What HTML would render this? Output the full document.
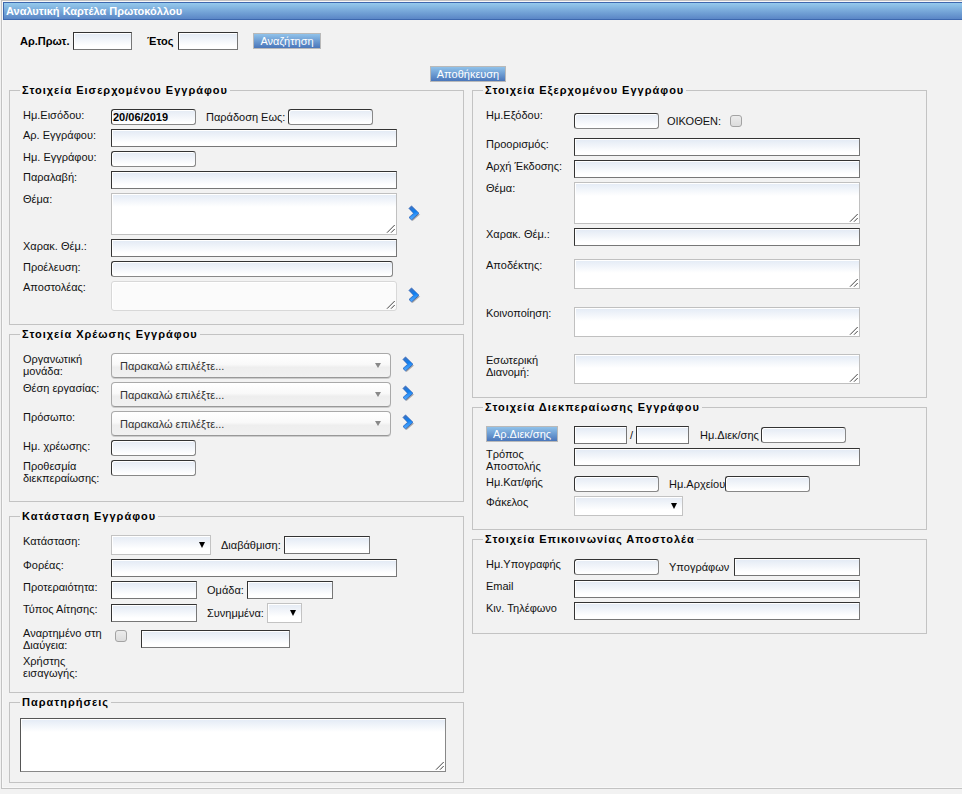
<!DOCTYPE html>
<html><head><meta charset="utf-8"><style>
*{margin:0;padding:0;box-sizing:border-box}
html,body{width:962px;height:794px;overflow:hidden;background:#f2f2f2;font-family:"Liberation Sans",sans-serif;font-size:11px;color:#000}
#frame{position:absolute;left:1px;top:0;width:1000px;height:789px;border:1px solid #c3c3c3;border-right:none;box-shadow:inset 1px 1px 0 #f8f8f8, inset 0 -1px 0 #f8f8f8}
#hdr{position:absolute;left:3px;top:2px;width:990px;height:18px;border:1px solid #3d68ae;background:linear-gradient(#95caec,#5a86c6);color:#fff;font-weight:bold;font-size:11px;line-height:16px;padding-left:2px}
.t{position:absolute;white-space:nowrap;line-height:13px;color:#111}
.t.b{font-weight:bold;color:#000}
.t.ml{line-height:12px}
.in,.inr,.ta,.sel,.dd,.cb,.btn,.chev{position:absolute}
.in{border:1px solid #333;border-right-color:#777;border-bottom-color:#777;background:#fff linear-gradient(#e4ebf5,#fff) 0 1px/100% 12px no-repeat;box-shadow:inset 1px 1px 0 #fff}
.inr{border:1px solid #333;border-right-color:#888;border-bottom-color:#888;border-radius:3px;background:#fff linear-gradient(#e6ecf5,#fff) 0 1px/100% 12px no-repeat;box-shadow:inset 1px 1px 0 #fff}
.ta{border:1px solid #c0c0c0;background:#fff linear-gradient(#e5ecf6,#fff) 0 1px/100% 12px no-repeat;box-shadow:inset 1px 1px 0 #fff}
.ta.dis{background:#fbfbfb;border-color:#d8d8d8;border-radius:3px}
.ta.dk{border-color:#888;border-top-color:#555;border-left-color:#555;box-shadow:inset 1px 1px 0 #fff}
.grip{position:absolute;right:0px;bottom:0px}
.val{position:absolute;left:1px;top:1px;font-weight:bold;line-height:13px;color:#000}
.sel{border:1px solid #a9a9a9;border-bottom-color:#999;border-radius:4px;background:linear-gradient(#fff 0,#f9f9f9 45%,#eeeeee 58%,#f1f1f1 100%);box-shadow:0 1px 0 #ccc}
.sel .pt{position:absolute;left:8px;top:6px;line-height:13px;color:#333}
.sel .ar{position:absolute;right:9px;top:9px;width:0;height:0;border-left:3.5px solid transparent;border-right:3.5px solid transparent;border-top:5px solid #888}
.dd{border:1px solid #c3c3c3;background:#fff linear-gradient(#e6ecf5,#fff) 0 1px/100% 12px no-repeat;box-shadow:inset 1px 1px 0 #fff}
.dd .dar{position:absolute;right:5px;top:6px;width:0;height:0;border-left:3.5px solid transparent;border-right:3.5px solid transparent;border-top:6px solid #000}
.cb{width:12px;height:12px;border:1px solid #a3a3a3;border-radius:3px;background:linear-gradient(#ececec,#dcdcdc)}
.btn{border:1px solid #b9b9b9;background:linear-gradient(#90c2ea,#4a76ba);color:#fff;text-align:center;line-height:14px;font-size:11px}
.fs{position:absolute;border:1px solid #c3c3c3}
.lg{position:absolute;padding:0 2px;background:#f2f2f2;font-weight:bold;letter-spacing:1px;line-height:13px;color:#000;white-space:nowrap}
</style></head><body>
<div id="frame"></div>
<div id="hdr">Αναλυτική Καρτέλα Πρωτοκόλλου</div>
<div class="t b" style="left:20px;top:35px;">Αρ.Πρωτ.</div>
<div class="in" style="left:73px;top:32px;width:59px;height:18px"></div>
<div class="t b" style="left:147px;top:35px;">Έτος</div>
<div class="in" style="left:178px;top:32px;width:60px;height:18px"></div>
<div class="btn" style="left:253px;top:33px;width:68px;height:16px">Αναζήτηση</div>
<div class="btn" style="left:430px;top:66px;width:76px;height:16px">Αποθήκευση</div>
<div class="fs" style="left:9px;top:90px;width:455px;height:235px"></div>
<div class="lg" style="left:20px;top:84px">Στοιχεία Εισερχομένου Εγγράφου</div>
<div class="t " style="left:23px;top:109px;">Ημ.Εισόδου:</div>
<div class="inr" style="left:111px;top:109px;width:85px;height:16px"><span class="val">20/06/2019</span></div>
<div class="t " style="left:206px;top:111px;">Παράδοση Εως:</div>
<div class="inr" style="left:288px;top:109px;width:85px;height:16px"></div>
<div class="t " style="left:23px;top:129px;">Αρ. Εγγράφου:</div>
<div class="in" style="left:111px;top:129px;width:286px;height:18px"></div>
<div class="t " style="left:23px;top:151px;">Ημ. Εγγράφου:</div>
<div class="inr" style="left:111px;top:151px;width:85px;height:16px"></div>
<div class="t " style="left:23px;top:171px;">Παραλαβή:</div>
<div class="in" style="left:111px;top:171px;width:286px;height:18px"></div>
<div class="t " style="left:23px;top:193px;">Θέμα:</div>
<div class="ta" style="left:111px;top:193px;width:286px;height:42px"><svg class="grip" width="10" height="10" viewBox="0 0 10 10"><path d="M1 8.7 L8.7 1 M5 8.7 L8.7 5" stroke="#444" stroke-width="1" fill="none"/></svg></div>
<svg class="chev" style="left:407px;top:204px" width="15" height="18" viewBox="0 0 15 18"><defs><linearGradient id="cg407204" x1="0" y1="0" x2="0.2" y2="1"><stop offset="0" stop-color="#4470b8"/><stop offset="0.5" stop-color="#0e80f2"/><stop offset="1" stop-color="#5aaeff"/></linearGradient></defs><polygon points="6,10.6 13.2,10.2 5.6,17 3.4,14.8" fill="#555" opacity="0.5"/><polygon points="4.5,1.9 12,9.3 4.5,15.9 2,13.5 6.6,9.3 2,4.4" fill="url(#cg407204)" stroke="#2258b0" stroke-width="0.7" stroke-linejoin="round"/></svg>
<div class="t " style="left:23px;top:240px;">Χαρακ. Θέμ.:</div>
<div class="in" style="left:111px;top:239px;width:286px;height:18px"></div>
<div class="t " style="left:23px;top:261px;">Προέλευση:</div>
<div class="inr" style="left:111px;top:261px;width:282px;height:16px"></div>
<div class="t " style="left:23px;top:281px;">Αποστολέας:</div>
<div class="ta dis" style="left:111px;top:281px;width:286px;height:30px"><svg class="grip" width="10" height="10" viewBox="0 0 10 10"><path d="M1 8.7 L8.7 1 M5 8.7 L8.7 5" stroke="#444" stroke-width="1" fill="none"/></svg></div>
<svg class="chev" style="left:407px;top:286px" width="15" height="18" viewBox="0 0 15 18"><defs><linearGradient id="cg407286" x1="0" y1="0" x2="0.2" y2="1"><stop offset="0" stop-color="#4470b8"/><stop offset="0.5" stop-color="#0e80f2"/><stop offset="1" stop-color="#5aaeff"/></linearGradient></defs><polygon points="6,10.6 13.2,10.2 5.6,17 3.4,14.8" fill="#555" opacity="0.5"/><polygon points="4.5,1.9 12,9.3 4.5,15.9 2,13.5 6.6,9.3 2,4.4" fill="url(#cg407286)" stroke="#2258b0" stroke-width="0.7" stroke-linejoin="round"/></svg>
<div class="fs" style="left:9px;top:334px;width:455px;height:168px"></div>
<div class="lg" style="left:20px;top:328px">Στοιχεία Χρέωσης Εγγράφου</div>
<div class="t ml" style="left:23px;top:353px;">Οργανωτική<br>μονάδα:</div>
<div class="sel" style="left:111px;top:353px;width:280px;height:25px"><span class="pt">Παρακαλώ επιλέξτε...</span><span class="ar"></span></div>
<svg class="chev" style="left:401px;top:355px" width="15" height="18" viewBox="0 0 15 18"><defs><linearGradient id="cg401355" x1="0" y1="0" x2="0.2" y2="1"><stop offset="0" stop-color="#4470b8"/><stop offset="0.5" stop-color="#0e80f2"/><stop offset="1" stop-color="#5aaeff"/></linearGradient></defs><polygon points="6,10.6 13.2,10.2 5.6,17 3.4,14.8" fill="#555" opacity="0.5"/><polygon points="4.5,1.9 12,9.3 4.5,15.9 2,13.5 6.6,9.3 2,4.4" fill="url(#cg401355)" stroke="#2258b0" stroke-width="0.7" stroke-linejoin="round"/></svg>
<div class="t " style="left:23px;top:382px;">Θέση εργασίας:</div>
<div class="sel" style="left:111px;top:382px;width:280px;height:25px"><span class="pt">Παρακαλώ επιλέξτε...</span><span class="ar"></span></div>
<svg class="chev" style="left:401px;top:384px" width="15" height="18" viewBox="0 0 15 18"><defs><linearGradient id="cg401384" x1="0" y1="0" x2="0.2" y2="1"><stop offset="0" stop-color="#4470b8"/><stop offset="0.5" stop-color="#0e80f2"/><stop offset="1" stop-color="#5aaeff"/></linearGradient></defs><polygon points="6,10.6 13.2,10.2 5.6,17 3.4,14.8" fill="#555" opacity="0.5"/><polygon points="4.5,1.9 12,9.3 4.5,15.9 2,13.5 6.6,9.3 2,4.4" fill="url(#cg401384)" stroke="#2258b0" stroke-width="0.7" stroke-linejoin="round"/></svg>
<div class="t " style="left:23px;top:411px;">Πρόσωπο:</div>
<div class="sel" style="left:111px;top:411px;width:280px;height:25px"><span class="pt">Παρακαλώ επιλέξτε...</span><span class="ar"></span></div>
<svg class="chev" style="left:401px;top:413px" width="15" height="18" viewBox="0 0 15 18"><defs><linearGradient id="cg401413" x1="0" y1="0" x2="0.2" y2="1"><stop offset="0" stop-color="#4470b8"/><stop offset="0.5" stop-color="#0e80f2"/><stop offset="1" stop-color="#5aaeff"/></linearGradient></defs><polygon points="6,10.6 13.2,10.2 5.6,17 3.4,14.8" fill="#555" opacity="0.5"/><polygon points="4.5,1.9 12,9.3 4.5,15.9 2,13.5 6.6,9.3 2,4.4" fill="url(#cg401413)" stroke="#2258b0" stroke-width="0.7" stroke-linejoin="round"/></svg>
<div class="t " style="left:23px;top:440px;">Ημ. χρέωσης:</div>
<div class="inr" style="left:111px;top:440px;width:85px;height:16px"></div>
<div class="t ml" style="left:23px;top:460px;">Προθεσμία<br>διεκπεραίωσης:</div>
<div class="inr" style="left:111px;top:460px;width:85px;height:16px"></div>
<div class="fs" style="left:9px;top:516px;width:455px;height:177px"></div>
<div class="lg" style="left:20px;top:510px">Κατάσταση Εγγράφου</div>
<div class="t " style="left:23px;top:535px;">Κατάσταση:</div>
<div class="dd" style="left:111px;top:535px;width:100px;height:20px"><span class="dar"></span></div>
<div class="t " style="left:221px;top:539px;">Διαβάθμιση:</div>
<div class="in" style="left:284px;top:536px;width:86px;height:18px"></div>
<div class="t " style="left:23px;top:559px;">Φορέας:</div>
<div class="in" style="left:111px;top:559px;width:286px;height:18px"></div>
<div class="t " style="left:23px;top:581px;">Προτεραιότητα:</div>
<div class="in" style="left:111px;top:581px;width:86px;height:18px"></div>
<div class="t " style="left:207px;top:584px;">Ομάδα:</div>
<div class="in" style="left:247px;top:581px;width:86px;height:18px"></div>
<div class="t " style="left:23px;top:603px;">Τύπος Αίτησης:</div>
<div class="in" style="left:111px;top:604px;width:86px;height:18px"></div>
<div class="t " style="left:207px;top:607px;">Συνημμένα:</div>
<div class="dd" style="left:267px;top:603px;width:35px;height:20px"><span class="dar"></span></div>
<div class="t ml" style="left:23px;top:627px;">Αναρτημένο στη<br>Διαύγεια:</div>
<div class="cb" style="left:115px;top:630px"></div>
<div class="in" style="left:141px;top:630px;width:149px;height:18px"></div>
<div class="t ml" style="left:23px;top:655px;">Χρήστης<br>εισαγωγής:</div>
<div class="fs" style="left:9px;top:702px;width:455px;height:81px"></div>
<div class="lg" style="left:20px;top:696px">Παρατηρήσεις</div>
<div class="ta dk" style="left:20px;top:718px;width:426px;height:54px"><svg class="grip" width="10" height="10" viewBox="0 0 10 10"><path d="M1 8.7 L8.7 1 M5 8.7 L8.7 5" stroke="#444" stroke-width="1" fill="none"/></svg></div>
<div class="fs" style="left:472px;top:90px;width:455px;height:308px"></div>
<div class="lg" style="left:483px;top:84px">Στοιχεία Εξερχομένου Εγγράφου</div>
<div class="t " style="left:486px;top:109px;">Ημ.Εξόδου:</div>
<div class="inr" style="left:574px;top:113px;width:85px;height:16px"></div>
<div class="t " style="left:667px;top:115px;">ΟΙΚΟΘΕΝ:</div>
<div class="cb" style="left:730px;top:115px"></div>
<div class="t " style="left:486px;top:138px;">Προορισμός:</div>
<div class="in" style="left:574px;top:138px;width:286px;height:18px"></div>
<div class="t " style="left:486px;top:160px;">Αρχή Έκδοσης:</div>
<div class="in" style="left:574px;top:160px;width:286px;height:18px"></div>
<div class="t " style="left:486px;top:182px;">Θέμα:</div>
<div class="ta" style="left:574px;top:182px;width:286px;height:42px"><svg class="grip" width="10" height="10" viewBox="0 0 10 10"><path d="M1 8.7 L8.7 1 M5 8.7 L8.7 5" stroke="#444" stroke-width="1" fill="none"/></svg></div>
<div class="t " style="left:486px;top:228px;">Χαρακ. Θέμ.:</div>
<div class="in" style="left:574px;top:228px;width:286px;height:18px"></div>
<div class="t " style="left:486px;top:259px;">Αποδέκτης:</div>
<div class="ta" style="left:574px;top:259px;width:286px;height:30px"><svg class="grip" width="10" height="10" viewBox="0 0 10 10"><path d="M1 8.7 L8.7 1 M5 8.7 L8.7 5" stroke="#444" stroke-width="1" fill="none"/></svg></div>
<div class="t " style="left:486px;top:307px;">Κοινοποίηση:</div>
<div class="ta" style="left:574px;top:307px;width:286px;height:30px"><svg class="grip" width="10" height="10" viewBox="0 0 10 10"><path d="M1 8.7 L8.7 1 M5 8.7 L8.7 5" stroke="#444" stroke-width="1" fill="none"/></svg></div>
<div class="t ml" style="left:486px;top:354px;">Εσωτερική<br>Διανομή:</div>
<div class="ta" style="left:574px;top:354px;width:286px;height:30px"><svg class="grip" width="10" height="10" viewBox="0 0 10 10"><path d="M1 8.7 L8.7 1 M5 8.7 L8.7 5" stroke="#444" stroke-width="1" fill="none"/></svg></div>
<div class="fs" style="left:472px;top:407px;width:455px;height:123px"></div>
<div class="lg" style="left:483px;top:401px">Στοιχεία Διεκπεραίωσης Εγγράφου</div>
<div class="btn" style="left:486px;top:426px;width:72px;height:16px">Αρ.Διεκ/σης</div>
<div class="in" style="left:574px;top:426px;width:53px;height:18px"></div>
<div class="t " style="left:630px;top:429px;">/</div>
<div class="in" style="left:636px;top:426px;width:53px;height:18px"></div>
<div class="t " style="left:700px;top:429px;">Ημ.Διεκ/σης</div>
<div class="inr" style="left:761px;top:427px;width:85px;height:16px"></div>
<div class="t ml" style="left:486px;top:448px;">Τρόπος<br>Αποστολής</div>
<div class="in" style="left:574px;top:448px;width:286px;height:18px"></div>
<div class="t " style="left:486px;top:476px;">Ημ.Κατ/φής</div>
<div class="inr" style="left:574px;top:476px;width:85px;height:16px"></div>
<div class="t " style="left:669px;top:478px;">Ημ.Αρχείου</div>
<div class="inr" style="left:725px;top:476px;width:85px;height:16px"></div>
<div class="t " style="left:486px;top:496px;">Φάκελος</div>
<div class="dd" style="left:574px;top:496px;width:109px;height:20px"><span class="dar"></span></div>
<div class="fs" style="left:472px;top:539px;width:455px;height:95px"></div>
<div class="lg" style="left:483px;top:533px">Στοιχεία Επικοινωνίας Αποστολέα</div>
<div class="t " style="left:486px;top:558px;">Ημ.Υπογραφής</div>
<div class="inr" style="left:574px;top:559px;width:85px;height:16px"></div>
<div class="t " style="left:669px;top:561px;">Υπογράφων</div>
<div class="in" style="left:734px;top:558px;width:126px;height:18px"></div>
<div class="t " style="left:486px;top:580px;">Email</div>
<div class="in" style="left:574px;top:580px;width:286px;height:18px"></div>
<div class="t " style="left:486px;top:602px;">Κιν. Τηλέφωνο</div>
<div class="in" style="left:574px;top:602px;width:286px;height:18px"></div>
</body></html>
